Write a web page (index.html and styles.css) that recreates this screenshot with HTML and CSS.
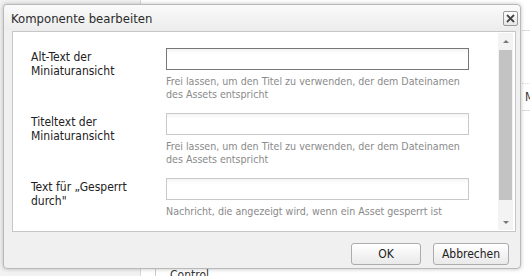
FILE: index.html
```html
<!DOCTYPE html>
<html lang="de">
<head>
    <meta charset="UTF-8">
    <title>Komponente bearbeiten</title>
    <link rel="stylesheet" href="styles.css">
</head>
<body>
    <div class="page">
        <div class="side"></div>
        <div class="main">
            <div class="main-bottom">Control</div>
        </div>
        <div class="right-strip">
            <div class="strip-line l1"></div>
            <div class="strip-line l2"></div>
            <div class="strip-text">M</div>
            <div class="strip-line l3"></div>
        </div>
    </div>

    <div class="dialog">
        <div class="dialog-head">
            <span class="dialog-title">Komponente bearbeiten</span>
            <button class="close-btn" title="Schließen">
                <svg width="11" height="11" viewBox="0 0 11 11">
                    <path d="M2 2 L9 9 M9 2 L2 9" stroke="#444" stroke-width="1.8" fill="none"/>
                </svg>
            </button>
        </div>

        <div class="dialog-body">
            <div class="form">
                <div class="row">
                    <label class="field-label">Alt-Text der Miniaturansicht</label>
                    <div class="field">
                        <input type="text" class="text-input active">
                        <div class="help">Frei lassen, um den Titel zu verwenden, der dem Dateinamen des Assets entspricht</div>
                    </div>
                </div>
                <div class="row">
                    <label class="field-label">Titeltext der Miniaturansicht</label>
                    <div class="field">
                        <input type="text" class="text-input">
                        <div class="help">Frei lassen, um den Titel zu verwenden, der dem Dateinamen des Assets entspricht</div>
                    </div>
                </div>
                <div class="row">
                    <label class="field-label">Text für „Gesperrt durch"</label>
                    <div class="field">
                        <input type="text" class="text-input">
                        <div class="help">Nachricht, die angezeigt wird, wenn ein Asset gesperrt ist</div>
                    </div>
                </div>
            </div>
            <div class="scrollbar">
                <div class="arrow up"></div>
                <div class="thumb"></div>
                <div class="arrow down"></div>
            </div>
        </div>

        <div class="dialog-foot">
            <button class="btn ok">OK</button>
            <button class="btn cancel">Abbrechen</button>
        </div>
    </div>
</body>
</html>
```

FILE: styles.css
```css
body {
    margin: 0;
    padding: 0;
    font-family: "DejaVu Sans Condensed", "DejaVu Sans", sans-serif;
    font-stretch: condensed;
    background: #fff;
    width: 530px;
    height: 276px;
    overflow: hidden;
}

/* seite hinter dem dialog */
.page {
    display: flex;
    height: 276px;
}

.side {
    width: 140px;
    background: #f2f2f2;
    border-right: 1px solid #d8d8d8;
}

.main {
    flex: 1;
    display: flex;
    flex-direction: column;
    justify-content: flex-end;
    padding-left: 14px;
}

.main-bottom {
    font-size: 12px;
    color: #333;
    padding-left: 14px;
    border-left: 1px solid #ccc;
    height: 8px;
    line-height: 14px;
}

.right-strip {
    width: 8px;
    padding-top: 30px;
}

.strip-line {
    border-top: 1px solid #ddd;
}

.l1 { margin-bottom: 52px; }
.l2 { border-top-style: dotted; }
.l3 { margin-top: 6px; }

.strip-text {
    font-size: 12px;
    color: #333;
    padding-left: 3px;
    margin-top: 6px;
}

/* dialog */
.dialog {
    position: absolute;
    left: 3px;
    top: 4px;
    width: 518px;
    height: 265px;
    box-sizing: border-box;
    background: #f0f0f0;
    border: 1px solid #b9b9b9;
    border-radius: 4px;
    box-shadow: 0 0 4px rgba(0, 0, 0, 0.25);
    display: flex;
    flex-direction: column;
}

.dialog-head {
    height: 26px;
    display: flex;
    align-items: center;
    justify-content: space-between;
    padding: 0 2px 0 7px;
    background: linear-gradient(#fafafa, #ececec);
    border-radius: 4px 4px 0 0;
}

.dialog-title {
    font-size: 13px;
    color: #2b2b2b;
}

.close-btn {
    width: 15px;
    height: 15px;
    padding: 0;
    border: 1px solid #9a9a9a;
    border-radius: 2px;
    background: linear-gradient(#ffffff, #e6e6e6);
    display: flex;
    align-items: center;
    justify-content: center;
}

.dialog-body {
    height: 201px;
    box-sizing: border-box;
    margin: 0 4px 0 8px;
    background: #fff;
    border: 1px solid #c6c6c6;
    display: flex;
}

.form {
    flex: 1;
    min-width: 0;
    padding: 16px 0 0 18px;
}

.row {
    display: flex;
    margin-bottom: 12px;
}

.field-label {
    flex: none;
    width: 135px;
    font-size: 12px;
    line-height: 14px;
    color: #222;
    margin-top: 2px;
    padding-right: 20px;
    box-sizing: border-box;
}

.field {
    flex: none;
    width: 303px;
}

.text-input {
    display: block;
    width: 303px;
    height: 22px;
    box-sizing: border-box;
    margin: 0;
    border: 1px solid #c9c9c9;
    background: linear-gradient(#f4f4f4, #fff 5px);
    font-family: inherit;
    font-size: 12px;
}

.text-input.active {
    border-color: #777;
}

.help {
    margin-top: 5px;
    font-size: 10.6px;
    line-height: 13px;
    color: #8a8a8a;
}

.scrollbar {
    flex: none;
    width: 15px;
    margin: 1px 2px 1px 0;
    background: #f3f3f3;
    display: flex;
    flex-direction: column;
    align-items: center;
}

.arrow {
    width: 0;
    height: 0;
    border-left: 3px solid transparent;
    border-right: 3px solid transparent;
}

.arrow.up {
    border-bottom: 3px solid #777;
    margin: 7px 0 7px;
}

.arrow.down {
    border-top: 3px solid #777;
    margin: auto 0 6px;
}

.thumb {
    width: 13px;
    height: 150px;
    background: #c3c3c3;
}

.dialog-foot {
    display: flex;
    justify-content: flex-end;
    padding: 11px 11px 0 0;
}

.btn {
    height: 22px;
    padding: 0;
    border: 1px solid #acacac;
    border-radius: 3px;
    background: linear-gradient(#ffffff, #e9e9e9);
    font-family: inherit;
    font-size: 12px;
    color: #222;
}

.btn.ok { width: 70px; }
.btn.cancel { width: 76px; margin-left: 12px; }
```
